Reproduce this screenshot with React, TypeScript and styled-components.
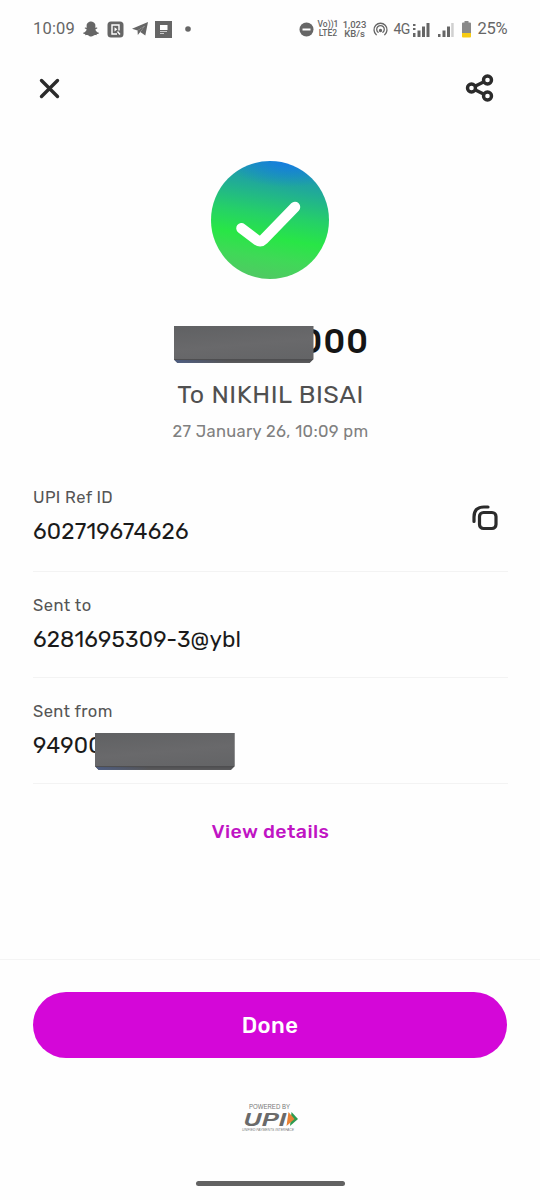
import React from "react";
import styled, { createGlobalStyle } from "styled-components";
import { FaSnapchatGhost } from "react-icons/fa";

const GlobalStyle = createGlobalStyle`
  * { box-sizing: border-box; }
  body { margin: 0; background: #fff; font-family: Rubik, Roboto, "Liberation Sans", sans-serif; }
  button { font: inherit; border: 0; padding: 0; background: none; color: inherit; cursor: pointer; }
`;

const Screen = styled.div`
  width: 540px;
  height: 1200px;
  display: flex;
  flex-direction: column;
  background: #fefefe;
  overflow: hidden;
`;

const StatusBar = styled.div`
  height: 58px;
  padding: 0 32px 0 33px;
  display: flex;
  align-items: center;
  color: #666;
  font-family: Roboto, "Liberation Sans", sans-serif;
  white-space: nowrap;
`;

const StatusItem = styled.div<{ $w: number; $gap?: number }>`
  width: ${(p) => p.$w}px;
  margin-left: ${(p) => p.$gap ?? 0}px;
  flex: none;
  display: flex;
  justify-content: center;
  svg { display: block; flex: none; }
`;

const StatusText = styled.span<{ $size: number; $spacing?: number }>`
  font-size: ${(p) => p.$size}px;
  letter-spacing: ${(p) => p.$spacing ?? 0}px;
  line-height: 20px;
`;

const Stacked = styled.div<{ $size: number }>`
  display: flex;
  flex-direction: column;
  align-items: center;
  font-size: ${(p) => p.$size}px;
  font-weight: 500;
  line-height: 9.5px;
`;

const Spacer = styled.div`flex: 1;`;

const Header = styled.header`
  height: 60px;
  padding: 0 44px 0 37px;
  display: flex;
  align-items: center;
  justify-content: space-between;
  svg { display: block; }
`;

const Summary = styled.section`
  height: 341px;
  padding-top: 43px;
  display: flex;
  flex-direction: column;
  align-items: center;
  white-space: nowrap;
`;

const SuccessBadge = styled.div`
  width: 118px;
  height: 118px;
  border-radius: 50%;
  background:
    radial-gradient(ellipse 62px 26px at 66% 0%, rgba(18, 118, 236, 0.8), rgba(18, 118, 236, 0) 100%),
    linear-gradient(189deg, #1b88c4 0%, #20a99a 24%, #25d068 46%, #28e646 63%, #3fd957 78%, #56c368 100%);
`;

const Amount = styled.div`
  width: 194px;
  height: 37px;
  margin: 47px 0 0 1px;
  display: flex;
  align-items: flex-start;
`;

const AmountText = styled.span`
  margin-left: -13px;
  font-size: 33px;
  line-height: 32px;
  font-weight: 500;
  letter-spacing: 1.2px;
  color: #151515;
`;

const Redaction = styled.div`
  position: relative;
  z-index: 1;
  flex: none;
  width: 140px;
  height: 37px;
  clip-path: polygon(0 0, 100% 0, 100% 33px, 136px 100%, 4px 100%, 0 33px);
  background:
    linear-gradient(90deg, rgba(70, 100, 170, 0.5), rgba(70, 100, 170, 0) 38%) 0 34px / 100% 3px no-repeat,
    linear-gradient(#4c4c4e, #5c5c5e) 0 33px / 100% 4px no-repeat,
    linear-gradient(175deg, #606163, #69696b 50%, #626365);
`;

const Recipient = styled.div`
  height: 40px;
  margin-top: 12px;
  padding-left: 1px;
  font-size: 25px;
  line-height: 40px;
  letter-spacing: 0.55px;
  color: #505050;
`;

const Timestamp = styled.div`
  margin-top: 2px;
  padding-left: 1px;
  font-size: 16.5px;
  line-height: 30px;
  letter-spacing: 0.35px;
  color: #808080;
`;

const Details = styled.section`
  margin: 0 32px 0 33px;
  display: flex;
  flex-direction: column;
`;

const DetailRow = styled.div<{ $h: number; $top: number }>`
  height: ${(p) => p.$h}px;
  padding-top: ${(p) => p.$top}px;
  border-bottom: 1px solid #f3f3f3;
  display: flex;
  justify-content: space-between;
  align-items: flex-start;
`;

const CopyButton = styled.button`
  margin: 16px 9px 0 0;
  svg { display: block; }
`;

const Label = styled.div<{ $spacing: number }>`
  font-size: 16.5px;
  line-height: 20px;
  letter-spacing: ${(p) => p.$spacing}px;
  color: #555;
`;

const Value = styled.div<{ $spacing: number }>`
  height: 36px;
  margin-top: 6px;
  display: flex;
  font-size: 22.5px;
  line-height: 36px;
  letter-spacing: ${(p) => p.$spacing}px;
  color: #1a1a1a;
`;

const ValueMask = styled(Redaction)`
  margin: 5px 0 0 -8px;
`;

const DetailsLink = styled.button`
  align-self: center;
  margin-top: 33px;
  font-size: 19.5px;
  line-height: 30px;
  font-weight: 500;
  letter-spacing: 0.45px;
  color: #c014c4;
`;

const Footer = styled.footer`
  margin-top: auto;
  height: 241px;
  border-top: 1px solid #f4f4f4;
  padding: 32px 33px 0;
  display: flex;
  flex-direction: column;
  align-items: center;
`;

const DoneButton = styled.button`
  width: 474px;
  height: 66px;
  flex: none;
  border-radius: 33px;
  background: #d407d8;
  color: #fff;
  font-size: 22px;
  font-weight: 500;
  letter-spacing: 0.4px;
`;

const UpiLogo = styled.svg`
  display: block;
  margin-top: 44px;
`;

const HomeIndicator = styled.div`
  width: 149px;
  height: 5px;
  margin-top: 49px;
  border-radius: 3px;
  background: #626262;
`;

const App = () => (
  <>
    <GlobalStyle />
    <Screen>
      <StatusBar>
        <StatusItem $w={42}><StatusText $size={16.5} $spacing={0.2}>10:09</StatusText></StatusItem>
        <StatusItem $w={16} $gap={8}><FaSnapchatGhost size={16} /></StatusItem>
        <StatusItem $w={17} $gap={8}>
          <svg width="17" height="17" viewBox="0 0 17 17">
            <rect x="0.5" y="0.5" width="16" height="16" rx="3.5" fill="#666" />
            <path d="M12 9.5V4H5v9h5M10.5 10.5l2.5 3" fill="none" stroke="#fff" strokeWidth="1.4" />
            <path d="M7.5 6.2l2.8 2.1-2.8 2.1z" fill="#fff" />
          </svg>
        </StatusItem>
        <StatusItem $w={17} $gap={7}>
          <svg width="16" height="14" viewBox="0 0 16 14" fill="#666">
            <path d="M0 6.8L16 0l-2.700 13.500-5-3.600L13 3.800 5.500 8.500z" />
            <path d="M5.500 8.500L13 3.800 8 10.200 5.800 13z" />
          </svg>
        </StatusItem>
        <StatusItem $w={17} $gap={7}>
          <svg width="17" height="17" viewBox="0 0 17 17">
            <rect width="17" height="17" fill="#666" />
            <path d="M5 4h7.5v5H5z" fill="#fff" />
            <path d="M5 10.5h7M5 12.5h4" stroke="#c8c8c8" strokeWidth="1" />
          </svg>
        </StatusItem>
        <StatusItem $w={6} $gap={13}>
          <svg width="6" height="6"><circle cx="3" cy="3" r="2.8" fill="#666" /></svg>
        </StatusItem>
        <Spacer />
        <StatusItem $w={15}>
          <svg width="15" height="15" viewBox="0 0 15 15">
            <circle cx="7.5" cy="7.5" r="7" fill="#666" />
            <path d="M3.5 7.5h8" stroke="#fff" strokeWidth="2" />
          </svg>
        </StatusItem>
        <StatusItem $w={20} $gap={4}>
          <Stacked $size={8.5}><span>Vo))1</span><span>LTE2</span></Stacked>
        </StatusItem>
        <StatusItem $w={25} $gap={4}>
          <Stacked $size={9.5}><span>1,023</span><span>KB/s</span></Stacked>
        </StatusItem>
        <StatusItem $w={15} $gap={6}>
          <svg width="15" height="15" viewBox="0 0 15 15" fill="none" stroke="#666" strokeWidth="1.3" strokeLinecap="round">
            <path d="M3.3 12.7a6.5 6.5 0 1 1 8.4 0M5.1 10.3a3.8 3.8 0 1 1 4.8 0" />
            <circle cx="7.5" cy="8.5" r="1" fill="#666" />
          </svg>
        </StatusItem>
        <StatusItem $w={17} $gap={5}><StatusText $size={14} $spacing={-0.8}>4G</StatusText></StatusItem>
        <StatusItem $w={17} $gap={3}>
          <svg width="17" height="15" viewBox="0 0 17 15" fill="#666">
            <path d="M0 2h2.5v2H0zM0 6h2.5v2H0zM0 11h2.5v4H0zM4.5 8.5h3V15h-3zM9 4.5h3V15H9zM13.5 1h3v14h-3z" />
          </svg>
        </StatusItem>
        <StatusItem $w={17} $gap={8}>
          <svg width="17" height="15" viewBox="0 0 17 15" fill="#666">
            <path d="M0 12h2.5v3H0zM4.5 8.5h3V15h-3zM9 4.5h3V15H9z" />
            <path d="M13.2 1h2.5v14h-2.5z" fill="#d0d0d0" />
          </svg>
        </StatusItem>
        <StatusItem $w={9} $gap={7}>
          <svg width="9" height="17" viewBox="0 0 9 17">
            <path d="M2.5 0h4v1.5H8q1 0 1 1V12H0V2.5q0-1 1-1h1.5z" fill="#898989" />
            <path d="M0 12h9v3.5q0 1-1 1H1q-1 0-1-1z" fill="#f7cb12" />
          </svg>
        </StatusItem>
        <StatusItem $w={31} $gap={6}><StatusText $size={16.5} $spacing={-0.2}>25%</StatusText></StatusItem>
      </StatusBar>

      <Header>
        <button aria-label="Close">
          <svg width="25" height="25" viewBox="0 0 25 25" fill="none" stroke="#2b2b2b" strokeWidth="3.4" strokeLinecap="round">
            <path d="M4.5 4.5l16 16M20.5 4.5l-16 16" />
          </svg>
        </button>
        <button aria-label="Share">
          <svg width="32" height="32" viewBox="0 0 32 32" fill="none" stroke="#2b2b2b" strokeWidth="3.4">
            <circle cx="7.5" cy="16" r="4" />
            <circle cx="23.5" cy="8" r="4" />
            <circle cx="23.5" cy="24" r="4" />
            <path d="M11 14.2l9-4.5M11 17.8l9 4.5" />
          </svg>
        </button>
      </Header>

      <Summary>
        <SuccessBadge>
          <svg width="118" height="118" viewBox="0 0 118 118" fill="none">
            <path d="M30.5 67.3L46 79.2q3.5 2.3 6.5-.7L84 46" stroke="#fff" strokeWidth="10.5" strokeLinecap="round" strokeLinejoin="round" />
          </svg>
        </SuccessBadge>
        <Amount>
          <Redaction />
          <AmountText>000</AmountText>
        </Amount>
        <Recipient>To NIKHIL BISAI</Recipient>
        <Timestamp>27 January 26, 10:09 pm</Timestamp>
      </Summary>

      <Details>
        <DetailRow $h={113} $top={29}>
          <div>
            <Label $spacing={0.35}>UPI Ref ID</Label>
            <Value $spacing={0.2}>602719674626</Value>
          </div>
          <CopyButton aria-label="Copy">
            <svg width="28" height="28" viewBox="0 0 28 28" fill="none" stroke="#2b2b2b" strokeWidth="3.2" strokeLinecap="round">
              <rect x="8.5" y="8.5" width="16.5" height="16" rx="4" />
              <path d="M3 17.5V13Q3 3 13 3H17" />
            </svg>
          </CopyButton>
        </DetailRow>
        <DetailRow $h={106} $top={24}>
          <div>
            <Label $spacing={0.45}>Sent to</Label>
            <Value $spacing={0.15}>6281695309-3@ybl</Value>
          </div>
        </DetailRow>
        <DetailRow $h={106} $top={24}>
          <div>
            <Label $spacing={0.4}>Sent from</Label>
            <Value $spacing={0.2}>
              <span>94900</span>
              <ValueMask />
            </Value>
          </div>
        </DetailRow>
        <DetailsLink>View details</DetailsLink>
      </Details>

      <Footer>
        <DoneButton>Done</DoneButton>
        <UpiLogo width="58" height="30" viewBox="0 0 58 30" fontFamily="Liberation Sans, sans-serif">
          <text x="8" y="6.5" fontSize="6.8" fill="#777" textLength="41" lengthAdjust="spacingAndGlyphs">POWERED BY</text>
          <text x="2.5" y="24" fontFamily="Rubik, Roboto, sans-serif" fontSize="19.5" fontStyle="italic" fontWeight="500" fill="#6a6a6a" textLength="43" lengthAdjust="spacingAndGlyphs">UPI</text>
          <path d="M50.5 10L57 17l-8 7z" fill="#2d9b50" />
          <path d="M47.5 10l6 7-8 7z" fill="#e98235" />
          <text x="1" y="29.2" fontSize="3.5" fontStyle="italic" fill="#777" textLength="52" lengthAdjust="spacingAndGlyphs">UNIFIED PAYMENTS INTERFACE</text>
        </UpiLogo>
        <HomeIndicator />
      </Footer>
    </Screen>
  </>
);

export default App;
